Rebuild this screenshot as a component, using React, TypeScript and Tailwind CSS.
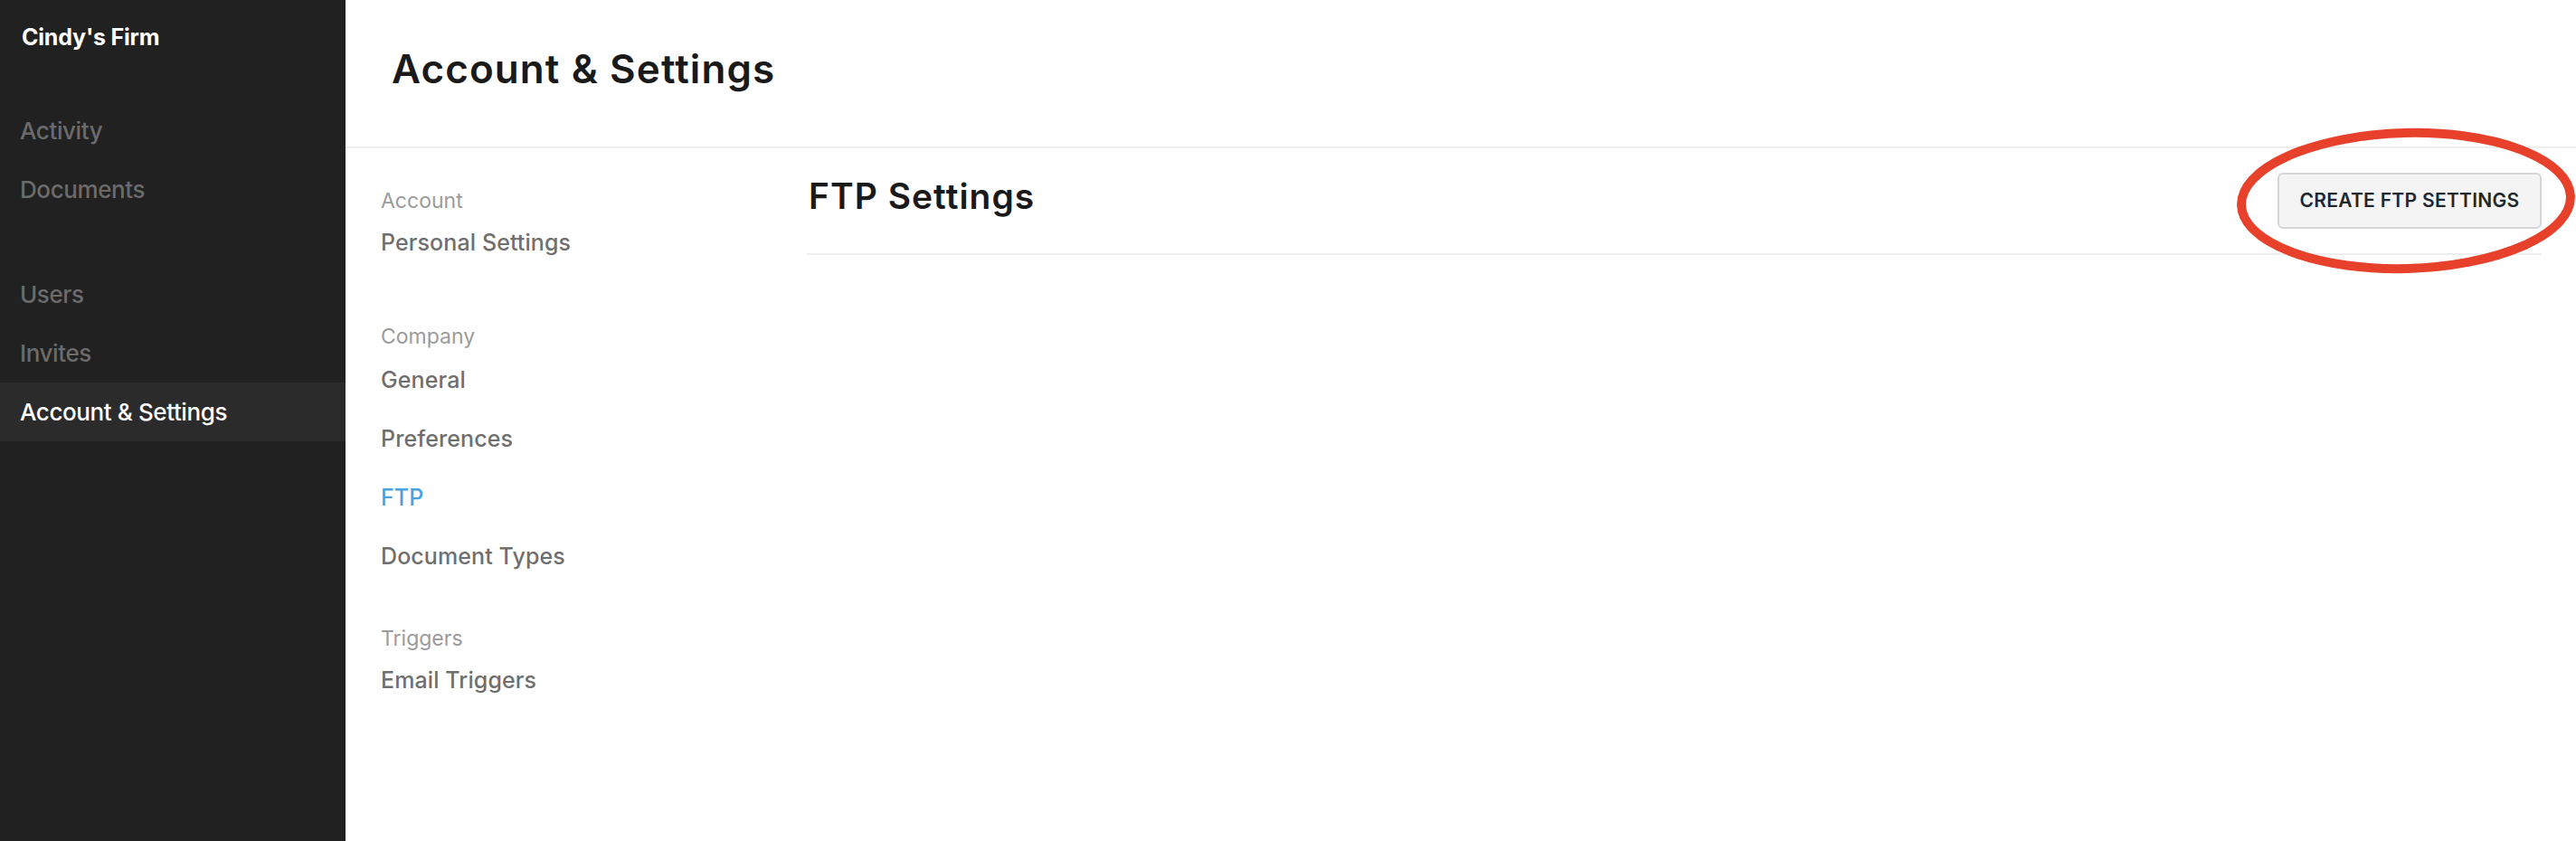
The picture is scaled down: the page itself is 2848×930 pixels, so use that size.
import React from "react";

const sidebarFont = { fontFamily: "Inter, 'Noto Sans', sans-serif" };

function SideItem({ label, active = false }: { label: string; active?: boolean }) {
  return (
    <div
      className={
        "flex h-[65px] items-center pl-[22px] text-[26px] font-medium tracking-[-0.4px] " +
        (active ? "bg-[#2b2b2b] text-white" : "text-[#6b6b6b]")
      }
    >
      {label}
    </div>
  );
}

function NavLabel({ label, className = "" }: { label: string; className?: string }) {
  return (
    <div className={"flex h-[32px] items-center text-[23px] text-[#9b9b9b] " + className}>
      {label}
    </div>
  );
}

function NavItem({
  label,
  active = false,
  className = "h-[65px]",
}: {
  label: string;
  active?: boolean;
  className?: string;
}) {
  return (
    <div
      className={
        "flex items-center text-[25px] font-medium tracking-[0.1px] " +
        (active ? "text-[#4aa3df] " : "text-[#6f6f6f] ") +
        className
      }
    >
      {label}
    </div>
  );
}

export default function App() {
  return (
    <div className="relative flex h-[930px] w-full overflow-hidden bg-white" style={sidebarFont}>
      {/* Sidebar */}
      <aside className="flex w-[382px] shrink-0 flex-col bg-[#212121]">
        <div className="flex h-[83px] items-center pl-[24px] text-[25px] font-bold tracking-[-0.2px] text-white">
          Cindy's Firm
        </div>
        <div className="pt-[29px]">
          <SideItem label="Activity" />
          <SideItem label="Documents" />
        </div>
        <div className="pt-[51px]">
          <SideItem label="Users" />
          <SideItem label="Invites" />
          <SideItem label="Account & Settings" active />
        </div>
      </aside>

      {/* Main */}
      <main className="flex min-w-0 flex-1 flex-col">
        <header className="h-[164px] border-b-2 border-[#eeeeee] pl-[51px] pt-[54px]">
          <h1 className="text-[44px] font-semibold leading-none tracking-[1.1px] text-[#1a1a1a]">
            Account &amp; Settings
          </h1>
        </header>

        <div className="flex flex-1">
          {/* Settings nav */}
          <nav className="w-[510px] shrink-0 pl-[39px] pt-[42px]">
            <NavLabel label="Account" />
            <NavItem label="Personal Settings" className="h-[62px]" />
            <NavLabel label="Company" className="mt-[56px]" />
            <NavItem label="General" />
            <NavItem label="Preferences" />
            <NavItem label="FTP" active />
            <NavItem label="Document Types" />
            <NavLabel label="Triggers" className="mt-[42px]" />
            <NavItem label="Email Triggers" className="h-[62px]" />
          </nav>

          {/* Content */}
          <section className="min-w-0 flex-1 pr-[38px]">
            <div className="flex h-[118px] items-center justify-between border-b-2 border-[#eeeeee]">
              <h2 className="mb-[9px] pl-[2px] text-[39px] font-semibold tracking-[1px] text-[#1a1a1a]">
                FTP Settings
              </h2>
              <button className="flex h-[62px] w-[292px] items-center justify-center rounded-[6px] border-2 border-[#d6d6d6] bg-[#f4f4f4] text-[21px] font-semibold tracking-[0.3px] text-[#1f272d]">
                CREATE FTP SETTINGS
              </button>
            </div>
          </section>
        </div>
      </main>

      {/* Annotation ellipse */}
      <svg
        className="pointer-events-none absolute left-[2468px] top-[137px]"
        width="380"
        height="170"
        viewBox="0 0 380 170"
      >
        <ellipse
          cx="192"
          cy="85"
          rx="182"
          ry="75"
          fill="none"
          stroke="#e8412b"
          strokeWidth="10"
          transform="rotate(-1.5 192 85)"
        />
      </svg>
    </div>
  );
}
